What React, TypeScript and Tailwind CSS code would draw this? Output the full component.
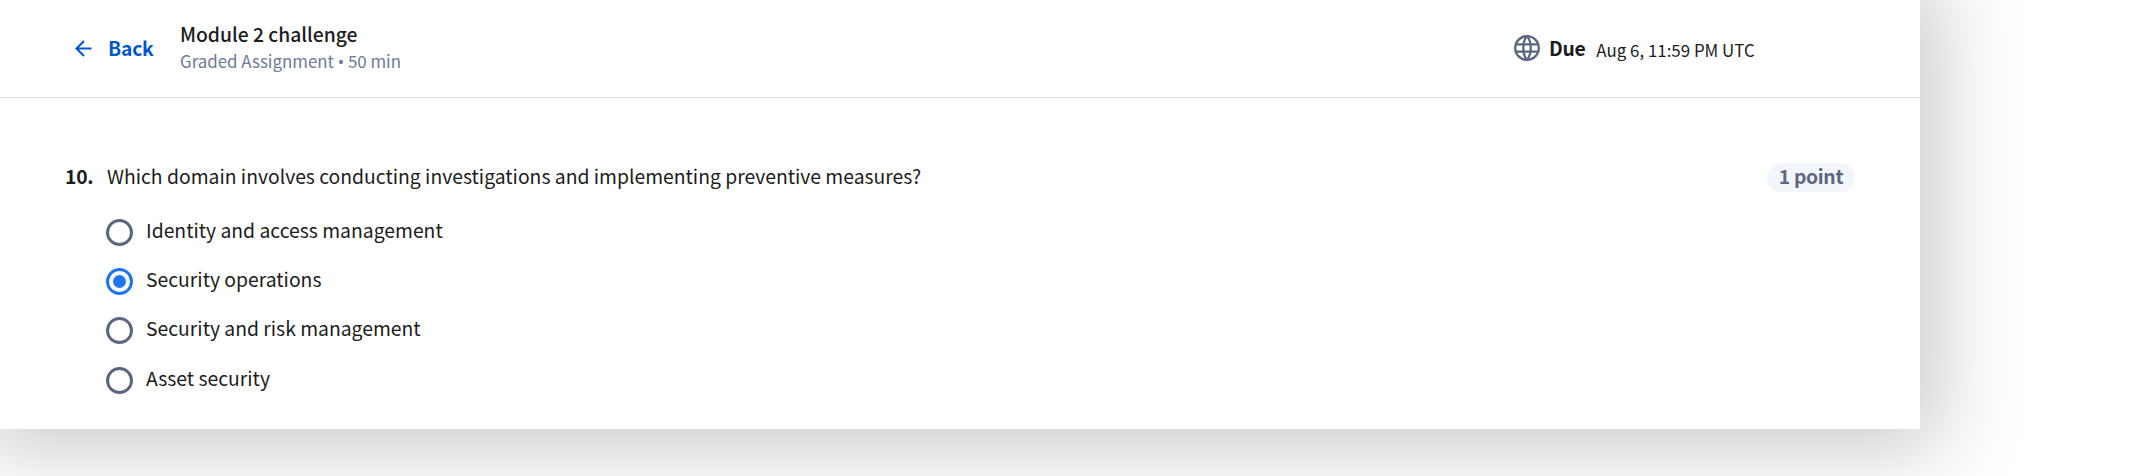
const options = [
  { label: "Identity and access management", checked: false },
  { label: "Security operations", checked: true },
  { label: "Security and risk management", checked: false },
  { label: "Asset security", checked: false },
];

function Radio({ checked }: { checked: boolean }) {
  return (
    <span
      className={
        checked
          ? "mt-[5px] -ml-px flex size-[27px] shrink-0 items-center justify-center rounded-full border-[3px] border-[#1f75f0]"
          : "mt-[5px] -ml-px flex size-[27px] shrink-0 items-center justify-center rounded-full border-[3px] border-[#5b6780]"
      }
    >
      {checked && <span className="size-[13px] rounded-full bg-[#1f75f0]" />}
    </span>
  );
}

function GlobeIcon() {
  return (
    <svg viewBox="0 0 26 26" className="mb-px size-[26px] text-[#5b6780]" fill="none" stroke="currentColor" strokeWidth="2.3">
      <circle cx="13" cy="13" r="11.8" />
      <path d="M2 9.3h22M2 16.7h22" />
      <path d="M13 1C8 7 8 19 13 25M13 1c5 6 5 18 0 24" />
    </svg>
  );
}

export default function App() {
  return (
    <div className="h-[476px] w-[2133px] overflow-hidden bg-white font-['Noto_Sans_CJK_SC','Noto_Sans',sans-serif] text-[#1b1c20]">
      <main className="h-[429px] w-[1920px] bg-white shadow-[0_0_80px_20px_rgba(0,0,0,0.21)]">
        <header className="flex h-[98px] items-center border-b border-[#dcdee6] pl-[75px] whitespace-nowrap">
          <a className="flex w-[105px] items-center text-[#0056d2]">
            <svg viewBox="0 0 17 17" className="size-[17px]" fill="none" stroke="currentColor" strokeWidth="2">
              <path d="M16.5 8.5H1.8M9 1 1.5 8.5 9 16" />
            </svg>
            <span className="ml-4 pb-0.5 text-[19.3px] leading-7 font-bold tracking-[-0.2px]">Back</span>
          </a>
          <div className="w-[1334px] pb-[3px]">
            <h1 className="text-[19.3px] leading-7 font-medium">Module 2 challenge</h1>
            <p className="text-[16.9px] leading-[26px] text-[#6b7a99]">
              Graded Assignment <span className="font-['Noto_Sans']">•</span> 50 min
            </p>
          </div>
          <GlobeIcon />
          <span className="ml-[9px] text-[19.3px] font-bold tracking-[-0.3px]">Due</span>
          <span className="ml-[11px] pt-0.5 text-[16.9px]">Aug 6, 11:59 PM UTC</span>
        </header>
        <section className="flex items-start pt-[63px] pr-[65px] pl-[65px] whitespace-nowrap">
          <span className="w-[42px] text-[19.3px] leading-[30px] font-bold tracking-[-0.2px]">10.</span>
          <div className="flex-1">
            <p className="text-[19.33px] leading-[30px]">
              Which domain involves conducting investigations and implementing preventive measures?
            </p>
            <ul className="mt-[14px]">
              {options.map((o) => (
                <li key={o.label} className="flex h-[49.3px] items-center gap-[13px]">
                  <Radio checked={o.checked} />
                  <span className="text-[19.33px] leading-[30px]">{o.label}</span>
                </li>
              ))}
            </ul>
          </div>
          <span className="mt-0.5 flex h-[29px] w-[88px] items-center justify-center rounded-full bg-[#f2f5fa] pb-0.5 text-[19.3px] font-bold tracking-[-0.3px] text-[#5b6780]">
            1 point
          </span>
        </section>
      </main>
    </div>
  );
}
